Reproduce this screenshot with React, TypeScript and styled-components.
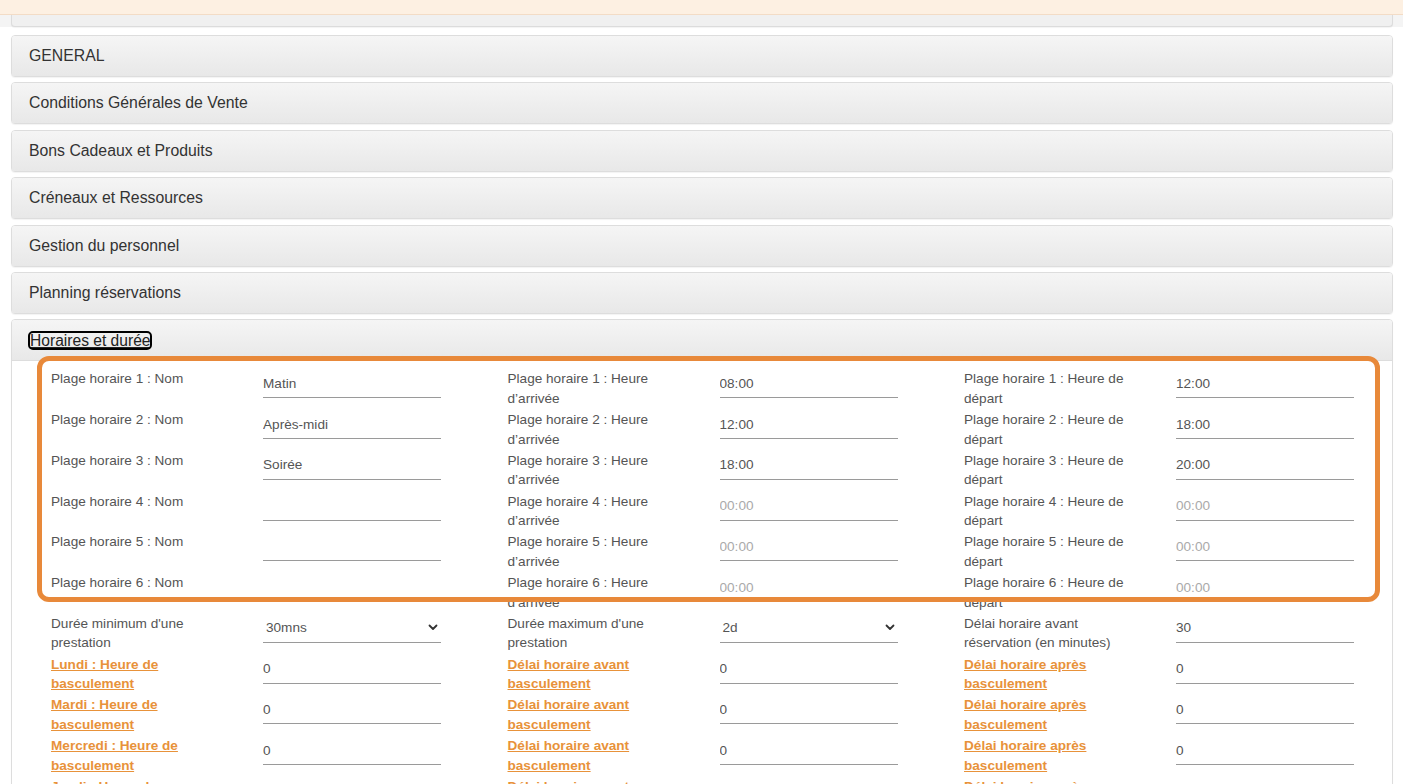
import React from 'react';
import styled, { createGlobalStyle } from 'styled-components';

const GlobalStyle = createGlobalStyle`
    html, body {
        margin: 0;
        padding: 0;
        background: #ffffff;
        font-family: "Liberation Sans", Arial, sans-serif;
        overflow: hidden;
    }
`

type Field = {
    label: string
    value?: string
    placeholder?: string
    select?: boolean
    link?: boolean
}

const sections = [
    'GENERAL',
    'Conditions Générales de Vente',
    'Bons Cadeaux et Produits',
    'Créneaux et Ressources',
    'Gestion du personnel',
    'Planning réservations',
]

const plages = [
    { nom: 'Matin', arrivee: '08:00', depart: '12:00' },
    { nom: 'Après-midi', arrivee: '12:00', depart: '18:00' },
    { nom: 'Soirée', arrivee: '18:00', depart: '20:00' },
    { nom: '', arrivee: '', depart: '' },
    { nom: '', arrivee: '', depart: '' },
    { nom: '', arrivee: '', depart: '' },
]

const days = ['Lundi', 'Mardi', 'Mercredi', 'Jeudi', 'Vendredi', 'Samedi', 'Dimanche']

const buildFields = (): Field[] => {
    const list: Field[] = []
    plages.forEach((p, i) => {
        const n = i + 1
        list.push({ label: `Plage horaire ${n} : Nom`, value: p.nom })
        list.push({ label: `Plage horaire ${n} : Heure d’arrivée`, value: p.arrivee, placeholder: '00:00' })
        list.push({ label: `Plage horaire ${n} : Heure de départ`, value: p.depart, placeholder: '00:00' })
    })
    list.push({ label: "Durée minimum d'une prestation", value: '30mns', select: true })
    list.push({ label: "Durée maximum d'une prestation", value: '2d', select: true })
    list.push({ label: 'Délai horaire avant réservation (en minutes)', value: '30' })
    days.forEach((d) => {
        list.push({ label: `${d} : Heure de basculement`, value: '0', link: true })
        list.push({ label: 'Délai horaire avant basculement', value: '0', link: true })
        list.push({ label: 'Délai horaire après basculement', value: '0', link: true })
    })
    return list
}

const Chevron = () => (
    <svg width="10" height="7" viewBox="0 0 10 7">
        <path d="M1.5 1.5 L5 5 L8.5 1.5" fill="none" stroke="#333" strokeWidth="1.8" strokeLinecap="round" strokeLinejoin="round" />
    </svg>
)

const FormField: React.FC<{ field: Field }> = ({ field }) => (
    <FieldRow>
        <LabelCell>
            {field.link ? <LinkLabel href="#">{field.label}</LinkLabel> : <Label>{field.label}</Label>}
        </LabelCell>
        {field.select ? (
            <SelectBox>
                <span>{field.value}</span>
                <Chevron />
            </SelectBox>
        ) : (
            <Input readOnly value={field.value} placeholder={field.placeholder} />
        )}
    </FieldRow>
)

export default function App() {
    const fields = buildFields()
    return (
        <>
            <GlobalStyle />
            <Notice />
            <PrevTail>
                <PrevTailPanel />
            </PrevTail>
            <Accordion>
                {sections.map((s) => (
                    <Panel key={s}>
                        <PanelHeading>
                            <HeadingText>{s}</HeadingText>
                        </PanelHeading>
                    </Panel>
                ))}
                <Panel>
                    <PanelHeading>
                        <FocusedTitle href="#">Horaires et durée</FocusedTitle>
                    </PanelHeading>
                    <PanelBody>
                        <FieldGrid>
                            {fields.map((f, i) => (
                                <FormField key={i} field={f} />
                            ))}
                        </FieldGrid>
                    </PanelBody>
                    <Highlight />
                </Panel>
            </Accordion>
        </>
    )
}

const Notice = styled.div`
    height: 14px;
    background-color: #fdf0e2;
    border-bottom: 1px solid #f3dcc6;
`
const PrevTail = styled.div`
    background-color: #f4f4f4;
    height: 12px;
    padding: 0 10px 0 11px;
`
const PrevTailPanel = styled.div`
    height: 11px;
    border: 1px solid #dcdcdc;
    border-top: none;
    border-radius: 0 0 4px 4px;
    background: #f0f0f0;
    box-shadow: 0 1px 1px rgba(0, 0, 0, 0.05);
`
const Accordion = styled.div`
    display: flex;
    flex-direction: column;
    gap: 5.4px;
    padding: 8px 10px 0 11px;
`
const Panel = styled.div`
    position: relative;
    border: 1px solid #dddddd;
    border-radius: 4px;
    background: #ffffff;
    box-shadow: 0 1px 1px rgba(0, 0, 0, 0.05);
`
const PanelHeading = styled.div`
    height: 40px;
    display: flex;
    align-items: center;
    padding: 0 17px;
    background-image: linear-gradient(to bottom, #f5f5f5 0%, #e8e8e8 100%);
    border-radius: 3px 3px 0 0;
    & + div {
        border-top: 1px solid #dddddd;
    }
`
const HeadingText = styled.span`
    font-size: 15.8px;
    color: #333333;
`
const FocusedTitle = styled.a`
    font-size: 15.6px;
    color: #222222;
    text-decoration: underline;
    outline: 2px solid #000000;
    border-radius: 3px;
    line-height: 15px;
    margin-left: 1px;
`
const PanelBody = styled.div`
    padding: 8px 0 0 24px;
`
const FieldGrid = styled.div`
    display: grid;
    grid-template-columns: 456.5px 456.5px 1fr;
    grid-auto-rows: 40.75px;
`
const FieldRow = styled.div`
    display: flex;
    align-items: flex-start;
    padding-left: 15px;
`
const LabelCell = styled.div`
    width: 212px;
    flex-shrink: 0;
    padding-right: 32px;
    box-sizing: border-box;
`
const Label = styled.div`
    font-size: 13.6px;
    line-height: 19.5px;
    color: #555555;
`
const LinkLabel = styled.a`
    display: block;
    font-size: 13.6px;
    line-height: 19.5px;
    font-weight: bold;
    color: #e8923a;
    text-decoration: underline;
`
const Input = styled.input`
    width: 178px;
    height: 29px;
    box-sizing: border-box;
    border: none;
    border-bottom: 1px solid #9a9a9a;
    padding: 0;
    margin: 0;
    background: transparent;
    font-family: "Liberation Sans", Arial, sans-serif;
    font-size: 13.6px;
    color: #555555;
    outline: none;
    &::placeholder {
        color: #aaaaaa;
    }
`
const SelectBox = styled.div`
    width: 178px;
    height: 29px;
    box-sizing: border-box;
    border-bottom: 1px solid #9a9a9a;
    padding: 0 3px 0 3px;
    display: flex;
    align-items: center;
    justify-content: space-between;
    font-size: 13.6px;
    color: #555555;
`
const Highlight = styled.div`
    position: absolute;
    left: 25px;
    top: 36px;
    width: 1343px;
    height: 246px;
    box-sizing: border-box;
    border: 5px solid #e8893a;
    border-radius: 12px;
    pointer-events: none;
`
